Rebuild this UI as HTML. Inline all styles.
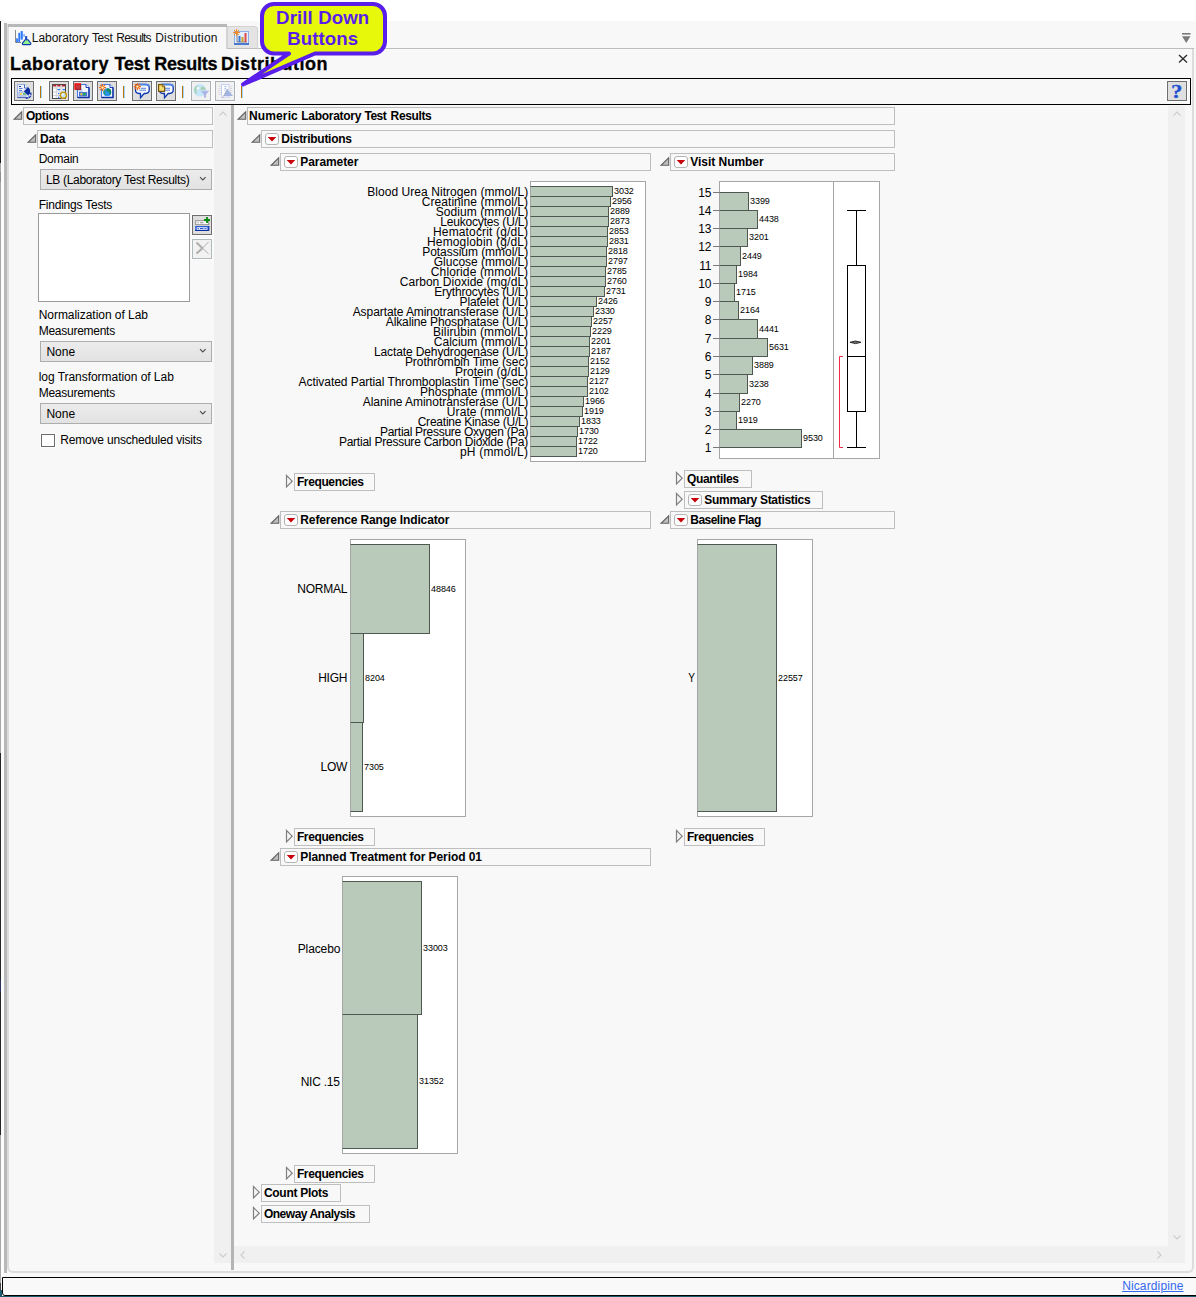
<!DOCTYPE html>
<html lang="en"><head><meta charset="utf-8"><title>Laboratory Test Results Distribution</title>
<style>
html,body{margin:0;padding:0;background:#fff;}
body{width:1196px;height:1297px;overflow:hidden;position:relative;font-family:"Liberation Sans",sans-serif;font-size:12px;color:#000;}
#root{position:absolute;left:0;top:0;width:1196px;height:1297px;overflow:hidden;}
#root div,#root span,#root svg,#root a{position:absolute;box-sizing:border-box;}
.t{white-space:nowrap;line-height:1;}

.ob{border:1px solid #bebebe;background:#f8f8f8;height:18px;}
.rb{border:1px solid #b4b4b4;border-radius:3px;background:#fff;width:14px;height:12px;}
.fr{border:1px solid #a6a6a6;background:#fff;}
.bar{border:1px solid #4e5850;border-left-color:#a6a6a6;background:#b9c9ba;}
.btn{border:1px solid #6e6e6e;background:#dfdfdf;width:20px;height:20px;box-shadow:0 0 0 1px #fdfdfd;}
.btd{border:1px solid #a9b0b6;background:#f1f1f1;width:20px;height:20px;box-shadow:0 0 0 1px #fdfdfd;}
.sep{width:1px;height:12px;background:#b8720a;border-right:1px solid #9ed6ff;box-sizing:content-box !important;}
.dd{border:1px solid #adadad;background:linear-gradient(#ececec,#e2e2e2);height:21px;width:172px;}
.tk{height:1px;background:#7a7a7a;width:6px;}

</style></head><body><div id="root">
<div style="left:0px;top:21px;width:1196px;height:1276px;background:#f8f8f8;"></div>
<div style="left:1px;top:21px;width:3px;height:1256px;background:#fcfcfc;"></div>
<div style="left:0px;top:21px;width:1px;height:142px;background:#1a1a1a;"></div>
<div style="left:0px;top:163px;width:1px;height:1120px;background:#a8a8a8;"></div>
<div style="left:0px;top:172px;width:1px;height:10px;background:#909090;"></div>
<div style="left:0px;top:753px;width:1px;height:382px;background:#242424;"></div>
<div style="left:0px;top:980px;width:1px;height:12px;background:#2a3060;"></div>
<div style="left:0px;top:1283px;width:1px;height:14px;background:#444;"></div>
<div style="left:4px;top:23px;width:3px;height:1250px;background:#b8b8b8;"></div>
<div style="left:7px;top:48px;width:1187px;height:1225px;border:2px solid #dcdcdc;border-top:none;border-radius:0 0 6px 6px;"></div>
<div style="left:7px;top:24px;width:2px;height:24px;background:#dcdcdc;"></div>
<div style="left:227px;top:48px;width:967px;height:1px;background:#bdbdbd;"></div>
<div style="left:8px;top:24px;width:219px;height:3px;background:#b8b8b8;"></div>
<div style="left:9px;top:27px;width:218px;height:22px;background:#f8f8f8;border-right:1px solid #d4d4d4;"></div>
<div style="left:227px;top:26px;width:31px;height:23px;background:#e4e4e4;border:1px solid #d2d2d2;border-radius:0 4px 0 0;border-bottom-color:#bdbdbd;"></div>
<svg style="left:14px;top:29px" width="18" height="17" viewBox="0 0 18 17">
<path d="M1.500 1v12.500h5.500" fill="none" stroke="#8a8a8a" stroke-width="1"/>
<rect x="2.100" y="9.300" width="1.800" height="4" fill="#2f7bff"/><rect x="4.300" y="3.800" width="1.800" height="9.500" fill="#2f7bff"/>
<rect x="6.600" y="2.100" width="2.200" height="8.500" fill="#2f7bff"/><rect x="9.300" y="5.100" width="1.500" height="2.600" fill="#6aa0ff"/>
<path d="M11.100 10.800L8.500 14.100c-.5.800 0 1.500.9 1.500h6.400c.9 0 1.400-.7.900-1.500L14.100 10.800z" fill="#8ef08e" stroke="#1038a8" stroke-width="1.100"/>
<rect x="11.100" y="7.100" width="2.100" height="4" fill="#1a4cc4"/>
</svg>
<span class="t" style="left:31.8px;top:32px;font-size:12px;color:#111;letter-spacing:-0.06px;">Laboratory</span>
<span class="t" style="left:92px;top:32px;font-size:12px;color:#111;letter-spacing:-0.4px;">Test</span>
<span class="t" style="left:116.3px;top:32px;font-size:12px;color:#111;letter-spacing:-0.79px;">Results</span>
<span class="t" style="left:155.2px;top:32px;font-size:12px;color:#111;letter-spacing:0.21px;">Distribution</span>
<svg style="left:232.500px;top:28.500px" width="17" height="17" viewBox="0 0 17 17">
<rect x="1.500" y="2.500" width="14" height="13" fill="#e4eefc" stroke="#8ab0ec" stroke-width="1"/>
<rect x="1" y="14" width="15" height="2" fill="#4a7ad0"/>
<path d="M4 5v8h10" fill="none" stroke="#808080" stroke-width="1"/>
<rect x="5.500" y="7" width="2" height="6" fill="#3c78d8"/><rect x="8.500" y="8" width="2" height="5" fill="#c8a028"/><rect x="11.500" y="4" width="2" height="9" fill="#e04848"/>
<path d="M3.500 0v7M0 3.500h7M1 1l5 5M6 1l-5 5" stroke="#f08c28" stroke-width="1"/>
</svg>
<svg style="left:1181px;top:32px" width="11" height="12" viewBox="0 0 11 12"><rect x="1" y="1" width="8.500" height="1.600" fill="#7a7a7a"/><path d="M1 4.200h8.500L5.250 11z" fill="#7a7a7a"/></svg>
<svg style="left:1178px;top:54px" width="10" height="10" viewBox="0 0 10 10"><path d="M1 1l8 7.500M9 1l-8 7.500" stroke="#2a2a2a" stroke-width="1.300" fill="none"/></svg>
<span class="t" style="left:10.1px;top:55px;font-size:18px;font-weight:bold;letter-spacing:0.5px;-webkit-text-stroke:.3px #000;">Laboratory</span>
<span class="t" style="left:114.4px;top:55px;font-size:18px;font-weight:bold;letter-spacing:-0.14px;-webkit-text-stroke:.3px #000;">Test</span>
<span class="t" style="left:154.2px;top:55px;font-size:18px;font-weight:bold;letter-spacing:-0.3px;-webkit-text-stroke:.3px #000;">Results</span>
<span class="t" style="left:221px;top:55px;font-size:18px;font-weight:bold;letter-spacing:0.5px;-webkit-text-stroke:.3px #000;">Distribution</span>
<div style="left:11px;top:78px;width:1180px;height:27px;background:#f8f8f8;border:1px solid #000;"></div>
<div class="btn" style="left:14px;top:81px;width:20px;height:20px;"></div>
<div class="btn" style="left:49px;top:81px;width:20px;height:20px;"></div>
<div class="btn" style="left:73px;top:81px;width:20px;height:20px;"></div>
<div class="btn" style="left:97px;top:81px;width:20px;height:20px;"></div>
<div class="btn" style="left:132px;top:81px;width:20px;height:20px;"></div>
<div class="btn" style="left:156px;top:81px;width:20px;height:20px;"></div>
<div class="btd" style="left:191px;top:81px;width:20px;height:20px;"></div>
<div class="btd" style="left:215px;top:81px;width:20px;height:20px;"></div>
<div class="btn" style="left:1167px;top:81px;width:20px;height:20px;"></div>
<div class="sep" style="left:40px;top:86px;width:1px;height:12px;"></div>
<div class="sep" style="left:123px;top:86px;width:1px;height:12px;"></div>
<div class="sep" style="left:182px;top:86px;width:1px;height:12px;"></div>
<div class="sep" style="left:241px;top:86px;width:1px;height:12px;"></div>
<svg style="left:14px;top:81px" width="20" height="20" viewBox="14 81 20 20"><path d="M17.500 84.500H25L28.500 88V97.500H17.500z" fill="#eef2fb" stroke="#9ab0e0"/><path d="M17.500 97.500H27" stroke="#4a68b8" stroke-width="1.200"/><path d="M24.500 84.500V88H28" fill="#fff" stroke="#4a68c0"/><path d="M19 86.500h2" stroke="#1a3aa0" stroke-width="1.200"/><path d="M19 88.500h3.500M19 90.500h3" stroke="#5a80d8" stroke-width="1.100"/><rect x="19" y="92" width="7" height="4" fill="#d8e2f6" stroke="#8aa2dc" stroke-width=".8"/><rect x="20" y="93" width="2" height="2" fill="#f4d250"/><rect x="23" y="93" width="2.500" height="2" fill="#6cc070"/><path d="M23.800 91.300L28 87.200L30 89.300V93.300L28 95.400z" fill="#0c2c9c"/><path d="M30.600 92.500c.8 2 .2 4.300-1.600 5.200-1 .5-2.200.7-3.800.6" fill="none" stroke="#1438a8" stroke-width="1.300" stroke-dasharray="2.600 .7"/></svg>
<svg style="left:49px;top:81px" width="20" height="20" viewBox="49 81 20 20"><rect x="52.500" y="84.500" width="13" height="14" fill="#fdfdfd" stroke="#4c4c4c"/><path d="M53 88h12M53 92h12M53 95.500h12M56.300 85v13M61 85v13" stroke="#c8c8c8" stroke-width=".8"/><path d="M53.200 85.600h3M57.300 85.600h3.200M61.800 85.600h3.200" stroke="#b4202c" stroke-width="1.600"/><path d="M57.500 89.700h2.600M62.500 89.700h2.500" stroke="#1c6cff" stroke-width="1.300"/><rect x="58" y="93" width="1.300" height="1.300" fill="#1c6cff"/><rect x="58" y="96.600" width="1.300" height="1.300" fill="#1c6cff"/><circle cx="63.400" cy="95.300" r="3" fill="#bfe4f8" stroke="#c89a14" stroke-width="1.500"/><circle cx="62.600" cy="94.500" r="1.100" fill="#eefaff"/></svg>
<svg style="left:73px;top:81px" width="20" height="20" viewBox="73 81 20 20"><path d="M77.5 84.5H86L89 87.5V97.5H77.5z" fill="#f2f6fe" stroke="#4a7ae0" stroke-width="1"/><path d="M86 84.5V87.5H89" fill="#fff" stroke="#1a3cb0" stroke-width="1"/><path d="M89 87.5V97.5H77.5" fill="none" stroke="#0c30a4" stroke-width="1.400"/><rect x="79.500" y="92.500" width="7.300" height="3.500" fill="#587ee0" stroke="#3a62d0" stroke-width=".8"/><rect x="80.400" y="93.200" width="1.800" height="2" fill="#fcd820"/><rect x="83.300" y="93.200" width="2.400" height="2" fill="#18b828"/><path d="M78 89.500h4M78.500 91h4" stroke="#7a98e0" stroke-width=".8"/><rect x="75" y="84" width="6" height="5.700" fill="#c43c40"/><path d="M75 89.700V84H81" fill="none" stroke="#f40808" stroke-width="1.300"/><path d="M75.400 89.400H80.700V84.600" fill="none" stroke="#9c1414" stroke-width=".9"/></svg>
<svg style="left:97px;top:81px" width="20" height="20" viewBox="97 81 20 20"><path d="M101.5 84.5H110L113 87.5V97.5H101.5z" fill="#f2f6fe" stroke="#4a7ae0" stroke-width="1"/><path d="M110 84.5V87.5H113" fill="#fff" stroke="#1a3cb0" stroke-width="1"/><path d="M113 87.5V97.5H101.5" fill="none" stroke="#0c30a4" stroke-width="1.400"/><circle cx="107.200" cy="92.300" r="4" fill="#2a94f0"/><path d="M107.200 88.300a4 4 0 0 1 4 4c0 1-.4 2-1 2.700-1-.3-1.400-1.200-1-2.200.4-1-.6-1.400-1.400-1.200-1 .2-1.800-.4-1.600-1.400.2-.9.800-1.500 1-1.900z" fill="#148a58"/><path d="M104 90.500c.8.300 1.500 1 1.400 2-.1 1 .5 1.600.3 2.600-.6-.2-2-1.300-2.300-2.500-.2-.8.100-1.600.6-2.100z" fill="#2aa06c"/><g stroke="#f06a10" stroke-width="1.100"><path d="M102.5 83.9v7.200M98.9 87.5h7.200M99.9 84.9l5.200 5.200M105.1 84.9l-5.200 5.200"/></g><circle cx="102.5" cy="87.5" r="1.200" fill="#ffe9b0"/></svg>
<svg style="left:132px;top:81px" width="20" height="20" viewBox="132 81 20 20"><path d="M138 84.500h8c2 0 3.200 1.400 3.200 3.200v2.400c0 2-1.500 3.400-3.500 3.400h-1.500l-3.700 4.200v-4.200h-1.500c-2.200 0-3.500-1.400-3.500-3.400v-2.400c0-1.800 1-3.200 2.500-3.200z" fill="#f4f9ff" stroke="#1038ac" stroke-width="1.300"/><path d="M137.6 84.500h8.600c1.600 0 2.600.8 3 2" fill="none" stroke="#4a88e8" stroke-width="1.300"/><path d="M141 88.300h5M139.5 90.200h6.500" stroke="#5a84d4" stroke-width="1"/><g stroke="#f06a10" stroke-width="1.100"><path d="M137.4 83.0v7.200M133.8 86.6h7.200M134.8 84.0l5.200 5.200M140.0 84.0l-5.200 5.200"/></g><circle cx="137.4" cy="86.6" r="1.200" fill="#ffe9b0"/></svg>
<svg style="left:156px;top:81px" width="20" height="20" viewBox="156 81 20 20"><path d="M162 84.500h8c2 0 3.200 1.400 3.200 3.200v2.400c0 2-1.500 3.400-3.500 3.400h-1.500l-3.700 4.200v-4.200h-1.500c-2.200 0-3.500-1.400-3.500-3.400v-2.400c0-1.800 1-3.200 2.500-3.200z" fill="#f4f9ff" stroke="#1038ac" stroke-width="1.300"/><path d="M161.6 84.500h8.600c1.600 0 2.600.8 3 2" fill="none" stroke="#4a88e8" stroke-width="1.300"/><path d="M165 88.300h5M163.5 90.200h6.500" stroke="#5a84d4" stroke-width="1"/><path d="M158.600 84.600h3.800l2.200 2.200v4.600h-6z" fill="#f8dc70" stroke="#7a5408" stroke-width="1.200"/><path d="M162.400 84.600v2.200h2.200" fill="#fff4c0" stroke="#7a5408" stroke-width=".8"/></svg>
<svg style="left:191px;top:81px" width="20" height="20" viewBox="191 81 20 20"><circle cx="199.800" cy="90.300" r="6.300" fill="#c4e6f8"/><path d="M196.500 86c1.500-.8 3 .2 2.400 1.700-.5 1.300-2.300.8-2.600 2.200-.3 1.500.8 2.300.3 3.600-.3.800-1 .6-1.400-.4-.5-1.300-.4-2.600-1-3.700.2-1.500 1-2.700 2.300-3.400zM202 86.200c1.800.3 3.400 1.800 4 3.600h-5.300c-.3-1 .1-2.800 1.300-3.600z" fill="#a9cfae"/><circle cx="198" cy="88" r="1.600" fill="#eef8fd"/><path d="M201 91h8l-3.100 3.400v3.400h-1.800v-3.400z" fill="#a8b2e2"/><path d="M201 91h8" stroke="#c4caee" stroke-width="1"/></svg>
<svg style="left:215px;top:81px" width="20" height="20" viewBox="215 81 20 20"><rect x="218" y="84.500" width="14.500" height="12.500" fill="#f2f2f2"/><path d="M218.500 86.500h2M218.500 88.500h2M218.500 90.500h2M218.500 92.500h2M218.500 94.500h2M230 86.500h2M230 88.500h2M230 90.500h2M230 92.500h2" stroke="#d2d2d2" stroke-width=".8"/><rect x="221.500" y="84.500" width="7.500" height="12.500" fill="#fdfdff" stroke="#c4d0f2"/><path d="M224.500 86.600h2M224.500 88.400h1.500M224.500 90.200h1" stroke="#8fa8e4" stroke-width=".9"/><path d="M227.200 89l5.800 7h-9.500z" fill="#a4b4e2"/><path d="M227.200 89l-4.700 9.600" stroke="#a0a0a0" stroke-width=".9" stroke-dasharray="1.300 .9" fill="none"/></svg>
<span class="t" style="left:1172.3px;top:82.3px;font-size:19px;font-weight:bold;color:#1c52d2;font-family:'Liberation Serif',serif;transform:scaleX(1.2);-webkit-text-stroke:.3px #1c52d2;">?</span>
<svg style="left:236px;top:0" width="156" height="90" viewBox="236 0 156 90">
<path d="M274 4h99a12 12 0 0 1 12 12v25.500a12 12 0 0 1 -12 12H315L243 84.500 289 53.500H274a12 12 0 0 1 -12 -12V16a12 12 0 0 1 12 -12z" fill="#e8f80a" stroke="#5a1eea" stroke-width="4" stroke-linejoin="round"/>
</svg>
<span class="t" style="left:276.09px;top:8.56px;font-size:18.67px;font-weight:bold;color:#5a1eea;letter-spacing:0.1px;">Drill Down</span>
<span class="t" style="left:287.14px;top:30.16px;font-size:18.67px;font-weight:bold;color:#5a1eea;letter-spacing:0.1px;">Buttons</span>
<div class="ob" style="left:23px;top:107px;width:190px;height:18px;"></div>
<svg style="left:12px;top:110px" width="11" height="11" viewBox="0 0 11 11"><path d="M2.100 9.300H9.700V1.800z" fill="#bebebe" stroke="#626262" stroke-width="1.100"/></svg>
<span class="t" style="left:25.9px;top:110px;font-size:12px;font-weight:bold;letter-spacing:-0.36px;">Options</span>
<div class="ob" style="left:37px;top:130px;width:176px;height:18px;"></div>
<svg style="left:26px;top:133px" width="11" height="11" viewBox="0 0 11 11"><path d="M2.100 9.300H9.700V1.800z" fill="#bebebe" stroke="#626262" stroke-width="1.100"/></svg>
<span class="t" style="left:39.9px;top:133px;font-size:12px;font-weight:bold;letter-spacing:-0.15px;">Data</span>
<span class="t" style="left:38.7px;top:153px;font-size:12px;letter-spacing:-0.26px;">Domain</span>
<div class="dd" style="left:40px;top:169px;width:172px;height:21px;"></div>
<span class="t" style="left:45.9px;top:174px;font-size:12px;letter-spacing:-0.3px;">LB (Laboratory Test Results)</span>
<svg style="left:199px;top:176px" width="8" height="6" viewBox="0 0 8 6"><path d="M1 1.200L3.800 4 6.600 1.200" fill="none" stroke="#4a4a4a" stroke-width="1.100"/></svg>
<span class="t" style="left:38.7px;top:199px;font-size:12px;letter-spacing:-0.22px;">Findings Tests</span>
<div style="left:38px;top:213px;width:152px;height:89px;background:#fff;border:1px solid #9a9a9a;"></div>
<div style="left:192px;top:215px;width:20px;height:20px;background:#dedede;border:1px solid #6e6e6e;box-shadow:0 0 0 1px #fdfdfd;"></div>
<svg style="left:194px;top:217px" width="17" height="17" viewBox="0 0 17 17">
<rect x="1.700" y="3.700" width="13" height="4" fill="#fff" stroke="#8e8e8e"/><path d="M3.500 5.700h1.300M6 5.700h3.500" stroke="#8e8e8e" stroke-width="1.100"/>
<rect x="1.200" y="9" width="13.700" height="5" fill="#2c5cd8"/><path d="M1.200 13.500h13.700V9" stroke="#0c2c9c" fill="none"/><rect x="2.700" y="10.300" width="10.700" height="2.400" fill="#fff"/><path d="M3.500 11.500h1.300M6 11.500h3.500M10.500 11.500h2" stroke="#2c5cd8" stroke-width="1.200"/>
<path d="M13 0v6M10 3h6" stroke="#0a8c12" stroke-width="1.900"/></svg>
<div style="left:192px;top:239px;width:20px;height:20px;background:#f2f2f2;border:1px solid #b2b9bd;box-shadow:0 0 0 1px #fdfdfd;"></div>
<svg style="left:195px;top:241px" width="15" height="15" viewBox="0 0 15 15"><path d="M1.500 1.500l6 5.700M7.500 7.200L1.500 12.500" stroke="#b0b0b0" stroke-width="2.200" fill="none"/><path d="M7.500 7.200L13.500 12.700M7.500 7.200L13.500 1" stroke="#b0b0b0" stroke-width="1" fill="none"/></svg>
<span class="t" style="left:38.7px;top:309px;font-size:12px;letter-spacing:-0.04px;">Normalization of Lab</span>
<span class="t" style="left:38.7px;top:325px;font-size:12px;letter-spacing:-0.26px;">Measurements</span>
<div class="dd" style="left:40px;top:341px;width:172px;height:21px;"></div>
<span class="t" style="left:46.4px;top:346px;font-size:12px;letter-spacing:0.05px;">None</span>
<svg style="left:199px;top:348px" width="8" height="6" viewBox="0 0 8 6"><path d="M1 1.200L3.800 4 6.600 1.200" fill="none" stroke="#4a4a4a" stroke-width="1.100"/></svg>
<span class="t" style="left:38.7px;top:371px;font-size:12px;letter-spacing:-0.04px;">log Transformation of Lab</span>
<span class="t" style="left:38.7px;top:387px;font-size:12px;letter-spacing:-0.26px;">Measurements</span>
<div class="dd" style="left:40px;top:403px;width:172px;height:21px;"></div>
<span class="t" style="left:46.4px;top:408px;font-size:12px;letter-spacing:0.05px;">None</span>
<svg style="left:199px;top:410px" width="8" height="6" viewBox="0 0 8 6"><path d="M1 1.200L3.800 4 6.600 1.200" fill="none" stroke="#4a4a4a" stroke-width="1.100"/></svg>
<div style="left:41px;top:434px;width:14px;height:13px;background:#fff;border:1px solid #6c6c6c;border-radius:.6px;box-shadow:0 0 0 1px #fdfdfd;"></div>
<span class="t" style="left:60.2px;top:434px;font-size:12px;letter-spacing:-0.18px;">Remove unscheduled visits</span>
<div style="left:214px;top:106px;width:17px;height:1157px;background:#f0f0f0;"></div>
<svg style="left:218.4px;top:108.5px" width="10" height="10" viewBox="0 0 10 10"><path d="M1.500 6.500L5 3l3.500 3.500" fill="none" stroke="#cdcdcd" stroke-width="1.100"/></svg>
<svg style="left:218.4px;top:1250px" width="10" height="10" viewBox="0 0 10 10"><path d="M1.500 3.500L5 7l3.500-3.500" fill="none" stroke="#cdcdcd" stroke-width="1.100"/></svg>
<div style="left:231px;top:105px;width:3px;height:1165px;background:#b4b4b4;"></div>
<div style="left:1168px;top:106px;width:17px;height:1157px;background:#f0f0f0;"></div>
<div style="left:234px;top:1246px;width:951px;height:17px;background:#f0f0f0;"></div>
<svg style="left:1172px;top:109px" width="10" height="10" viewBox="0 0 10 10"><path d="M1.500 6.500L5 3l3.500 3.500" fill="none" stroke="#cdcdcd" stroke-width="1.100"/></svg>
<svg style="left:1172px;top:1232px" width="10" height="10" viewBox="0 0 10 10"><path d="M1.500 3.500L5 7l3.500-3.500" fill="none" stroke="#cdcdcd" stroke-width="1.100"/></svg>
<svg style="left:238px;top:1250px" width="10" height="10" viewBox="0 0 10 10"><path d="M6.500 1.500L3 5l3.500 3.500" fill="none" stroke="#cdcdcd" stroke-width="1.100"/></svg>
<svg style="left:1154px;top:1250px" width="10" height="10" viewBox="0 0 10 10"><path d="M3.500 1.500L7 5 3.500 8.500" fill="none" stroke="#cdcdcd" stroke-width="1.100"/></svg>
<div style="left:2px;top:1277px;width:1200px;height:19px;background:#f9f9f9;border:1px solid #000;border-radius:0 0 0 3px;"></div>
<div style="left:0px;top:1296px;width:1196px;height:1px;background:#1c5a6e;"></div>
<div style="left:0px;top:1290px;width:2px;height:7px;background:#1c5a6e;border-radius:0 0 0 2px;"></div>
<a class="t" style="left:1122.13px;top:1280px;font-size:12px;color:#3468f0;letter-spacing:0.13px;text-decoration:underline;">Nicardipine</a>
<div class="ob" style="left:247px;top:107px;width:648px;height:18px;"></div>
<svg style="left:236px;top:110px" width="11" height="11" viewBox="0 0 11 11"><path d="M2.100 9.300H9.700V1.800z" fill="#bebebe" stroke="#626262" stroke-width="1.100"/></svg>
<span class="t" style="left:249.1px;top:110px;font-size:12px;font-weight:bold;letter-spacing:0.11px;">Numeric</span>
<span class="t" style="left:301.3px;top:110px;font-size:12px;font-weight:bold;letter-spacing:-0.29px;">Laboratory</span>
<span class="t" style="left:364.5px;top:110px;font-size:12px;font-weight:bold;letter-spacing:-0.52px;">Test</span>
<span class="t" style="left:390.6px;top:110px;font-size:12px;font-weight:bold;letter-spacing:-0.36px;">Results</span>
<div class="ob" style="left:261px;top:130px;width:634px;height:18px;"></div>
<svg style="left:250px;top:133px" width="11" height="11" viewBox="0 0 11 11"><path d="M2.100 9.300H9.700V1.800z" fill="#bebebe" stroke="#626262" stroke-width="1.100"/></svg>
<div class="rb" style="left:265px;top:133px;width:14px;height:12px;"></div>
<svg style="left:267px;top:136px" width="10" height="6" viewBox="0 0 10 6"><path d="M.7 1h8.600L5 5.400z" fill="#c8000a"/></svg>
<span class="t" style="left:281.3px;top:133px;font-size:12px;font-weight:bold;letter-spacing:-0.28px;">Distributions</span>
<div class="ob" style="left:280px;top:153px;width:371px;height:18px;"></div>
<svg style="left:269px;top:156px" width="11" height="11" viewBox="0 0 11 11"><path d="M2.100 9.300H9.700V1.800z" fill="#bebebe" stroke="#626262" stroke-width="1.100"/></svg>
<div class="rb" style="left:284px;top:156px;width:14px;height:12px;"></div>
<svg style="left:286px;top:159px" width="10" height="6" viewBox="0 0 10 6"><path d="M.7 1h8.600L5 5.400z" fill="#c8000a"/></svg>
<span class="t" style="left:300.3px;top:156px;font-size:12px;font-weight:bold;letter-spacing:-0.08px;">Parameter</span>
<div class="ob" style="left:670px;top:153px;width:225px;height:18px;"></div>
<svg style="left:659px;top:156px" width="11" height="11" viewBox="0 0 11 11"><path d="M2.100 9.300H9.700V1.800z" fill="#bebebe" stroke="#626262" stroke-width="1.100"/></svg>
<div class="rb" style="left:674px;top:156px;width:14px;height:12px;"></div>
<svg style="left:676px;top:159px" width="10" height="6" viewBox="0 0 10 6"><path d="M.7 1h8.600L5 5.400z" fill="#c8000a"/></svg>
<span class="t" style="left:690.3px;top:156px;font-size:12px;font-weight:bold;letter-spacing:-0.04px;">Visit Number</span>
<div class="fr" style="left:530px;top:181px;width:116px;height:281px;"></div>
<div class="bar" style="left:530px;top:186px;width:83px;height:11px;"></div>
<span class="t" style="left:367.2px;top:186px;font-size:12px;letter-spacing:0.06px;">Blood Urea Nitrogen (mmol/L)</span>
<span class="t" style="left:614px;top:186.5px;font-size:9px;letter-spacing:-0.05px;">3032</span>
<div class="bar" style="left:530px;top:196px;width:81px;height:11px;"></div>
<span class="t" style="left:421.8px;top:196px;font-size:12px;letter-spacing:0.05px;">Creatinine (mmol/L)</span>
<span class="t" style="left:612px;top:196.5px;font-size:9px;letter-spacing:-0.05px;">2956</span>
<div class="bar" style="left:530px;top:206px;width:79px;height:11px;"></div>
<span class="t" style="left:435.8px;top:206px;font-size:12px;letter-spacing:0.07px;">Sodium (mmol/L)</span>
<span class="t" style="left:610px;top:206.5px;font-size:9px;letter-spacing:-0.05px;">2889</span>
<div class="bar" style="left:530px;top:216px;width:79px;height:11px;"></div>
<span class="t" style="left:440.2px;top:216px;font-size:12px;letter-spacing:-0.17px;">Leukocytes (U/L)</span>
<span class="t" style="left:610px;top:216.5px;font-size:9px;letter-spacing:-0.05px;">2873</span>
<div class="bar" style="left:530px;top:226px;width:78px;height:11px;"></div>
<span class="t" style="left:433px;top:226px;font-size:12px;letter-spacing:0.15px;">Hematocrit (g/dL)</span>
<span class="t" style="left:609px;top:226.5px;font-size:9px;letter-spacing:-0.05px;">2853</span>
<div class="bar" style="left:530px;top:236px;width:78px;height:11px;"></div>
<span class="t" style="left:427px;top:236px;font-size:12px;letter-spacing:0.15px;">Hemoglobin (g/dL)</span>
<span class="t" style="left:609px;top:236.5px;font-size:9px;letter-spacing:-0.05px;">2831</span>
<div class="bar" style="left:530px;top:246px;width:77px;height:11px;"></div>
<span class="t" style="left:422.2px;top:246px;font-size:12px;letter-spacing:-0.04px;">Potassium (mmol/L)</span>
<span class="t" style="left:608px;top:246.5px;font-size:9px;letter-spacing:-0.05px;">2818</span>
<div class="bar" style="left:530px;top:256px;width:77px;height:11px;"></div>
<span class="t" style="left:433.8px;top:256px;font-size:12px;letter-spacing:-0.02px;">Glucose (mmol/L)</span>
<span class="t" style="left:608px;top:256.5px;font-size:9px;letter-spacing:-0.05px;">2797</span>
<div class="bar" style="left:530px;top:266px;width:76px;height:11px;"></div>
<span class="t" style="left:430.8px;top:266px;font-size:12px;letter-spacing:0.12px;">Chloride (mmol/L)</span>
<span class="t" style="left:607px;top:266.5px;font-size:9px;letter-spacing:-0.05px;">2785</span>
<div class="bar" style="left:530px;top:276px;width:76px;height:11px;"></div>
<span class="t" style="left:399.7px;top:276px;font-size:12px;letter-spacing:0.05px;">Carbon Dioxide (mg/dL)</span>
<span class="t" style="left:607px;top:276.5px;font-size:9px;letter-spacing:-0.05px;">2760</span>
<div class="bar" style="left:530px;top:286px;width:75px;height:11px;"></div>
<span class="t" style="left:434.2px;top:286px;font-size:12px;letter-spacing:-0.15px;">Erythrocytes (U/L)</span>
<span class="t" style="left:606px;top:286.5px;font-size:9px;letter-spacing:-0.05px;">2731</span>
<div class="bar" style="left:530px;top:296px;width:67px;height:11px;"></div>
<span class="t" style="left:459.5px;top:296px;font-size:12px;letter-spacing:-0.09px;">Platelet (U/L)</span>
<span class="t" style="left:598px;top:296.5px;font-size:9px;letter-spacing:-0.05px;">2426</span>
<div class="bar" style="left:530px;top:306px;width:64px;height:11px;"></div>
<span class="t" style="left:352.7px;top:306px;font-size:12px;letter-spacing:-0.08px;">Aspartate Aminotransferase (U/L)</span>
<span class="t" style="left:595px;top:306.5px;font-size:9px;letter-spacing:-0.05px;">2330</span>
<div class="bar" style="left:530px;top:316px;width:62px;height:11px;"></div>
<span class="t" style="left:385.8px;top:316px;font-size:12px;letter-spacing:-0.12px;">Alkaline Phosphatase (U/L)</span>
<span class="t" style="left:593px;top:316.5px;font-size:9px;letter-spacing:-0.05px;">2257</span>
<div class="bar" style="left:530px;top:326px;width:61px;height:11px;"></div>
<span class="t" style="left:433px;top:326px;font-size:12px;letter-spacing:0.1px;">Bilirubin (mmol/L)</span>
<span class="t" style="left:592px;top:326.5px;font-size:9px;letter-spacing:-0.05px;">2229</span>
<div class="bar" style="left:530px;top:336px;width:60px;height:11px;"></div>
<span class="t" style="left:433.8px;top:336px;font-size:12px;letter-spacing:0.02px;">Calcium (mmol/L)</span>
<span class="t" style="left:591px;top:336.5px;font-size:9px;letter-spacing:-0.05px;">2201</span>
<div class="bar" style="left:530px;top:346px;width:60px;height:11px;"></div>
<span class="t" style="left:374px;top:346px;font-size:12px;letter-spacing:-0.12px;">Lactate Dehydrogenase (U/L)</span>
<span class="t" style="left:591px;top:346.5px;font-size:9px;letter-spacing:-0.05px;">2187</span>
<div class="bar" style="left:530px;top:356px;width:59px;height:11px;"></div>
<span class="t" style="left:404.9px;top:356px;font-size:12px;letter-spacing:-0.06px;">Prothrombin Time (sec)</span>
<span class="t" style="left:590px;top:356.5px;font-size:9px;letter-spacing:-0.05px;">2152</span>
<div class="bar" style="left:530px;top:366px;width:59px;height:11px;"></div>
<span class="t" style="left:454.9px;top:366px;font-size:12px;letter-spacing:0.04px;">Protein (g/dL)</span>
<span class="t" style="left:590px;top:366.5px;font-size:9px;letter-spacing:-0.05px;">2129</span>
<div class="bar" style="left:530px;top:376px;width:58px;height:11px;"></div>
<span class="t" style="left:298.5px;top:376px;font-size:12px;letter-spacing:-0.05px;">Activated Partial Thromboplastin Time (sec)</span>
<span class="t" style="left:589px;top:376.5px;font-size:9px;letter-spacing:-0.05px;">2127</span>
<div class="bar" style="left:530px;top:386px;width:58px;height:11px;"></div>
<span class="t" style="left:420.1px;top:386px;font-size:12px;">Phosphate (mmol/L)</span>
<span class="t" style="left:589px;top:386.5px;font-size:9px;letter-spacing:-0.05px;">2102</span>
<div class="bar" style="left:530px;top:396px;width:54px;height:11px;"></div>
<span class="t" style="left:362.7px;top:396px;font-size:12px;letter-spacing:-0.04px;">Alanine Aminotransferase (U/L)</span>
<span class="t" style="left:585px;top:396.5px;font-size:9px;letter-spacing:-0.05px;">1966</span>
<div class="bar" style="left:530px;top:406px;width:53px;height:11px;"></div>
<span class="t" style="left:446.8px;top:406px;font-size:12px;letter-spacing:0.1px;">Urate (mmol/L)</span>
<span class="t" style="left:584px;top:406.5px;font-size:9px;letter-spacing:-0.05px;">1919</span>
<div class="bar" style="left:530px;top:416px;width:50px;height:11px;"></div>
<span class="t" style="left:417.7px;top:416px;font-size:12px;letter-spacing:-0.23px;">Creatine Kinase (U/L)</span>
<span class="t" style="left:581px;top:416.5px;font-size:9px;letter-spacing:-0.05px;">1833</span>
<div class="bar" style="left:530px;top:426px;width:48px;height:11px;"></div>
<span class="t" style="left:380px;top:426px;font-size:12px;letter-spacing:-0.28px;">Partial Pressure Oxygen (Pa)</span>
<span class="t" style="left:579px;top:426.5px;font-size:9px;letter-spacing:-0.05px;">1730</span>
<div class="bar" style="left:530px;top:436px;width:47px;height:11px;"></div>
<span class="t" style="left:338.9px;top:436px;font-size:12px;letter-spacing:-0.23px;">Partial Pressure Carbon Dioxide (Pa)</span>
<span class="t" style="left:578px;top:436.5px;font-size:9px;letter-spacing:-0.05px;">1722</span>
<div class="bar" style="left:530px;top:446px;width:47px;height:11px;"></div>
<span class="t" style="left:459.9px;top:446px;font-size:12px;letter-spacing:0.21px;">pH (mmol/L)</span>
<span class="t" style="left:578px;top:446.5px;font-size:9px;letter-spacing:-0.05px;">1720</span>
<div class="ob" style="left:294px;top:473px;width:81px;height:18px;"></div>
<svg style="left:285px;top:474px" width="9" height="14" viewBox="0 0 9 14"><path d="M1.500 1.500v11.400l5.700-5.700z" fill="#f6f6f6" stroke="#808080" stroke-width="1.200"/></svg>
<span class="t" style="left:296.9px;top:476px;font-size:12px;font-weight:bold;letter-spacing:-0.37px;">Frequencies</span>
<div class="fr" style="left:719px;top:181px;width:161px;height:278px;"></div>
<div style="left:833px;top:182px;width:1px;height:276px;background:#a6a6a6;"></div>
<div class="tk" style="left:713px;top:192px;width:6px;height:1px;"></div>
<span class="t" style="left:698.35px;top:187px;font-size:12px;letter-spacing:-0.3px;">15</span>
<div class="tk" style="left:713px;top:210px;width:6px;height:1px;"></div>
<span class="t" style="left:698.35px;top:205px;font-size:12px;letter-spacing:-0.3px;">14</span>
<div class="tk" style="left:713px;top:228px;width:6px;height:1px;"></div>
<span class="t" style="left:698.35px;top:223px;font-size:12px;letter-spacing:-0.3px;">13</span>
<div class="tk" style="left:713px;top:246px;width:6px;height:1px;"></div>
<span class="t" style="left:698.35px;top:241px;font-size:12px;letter-spacing:-0.3px;">12</span>
<div class="tk" style="left:713px;top:265px;width:6px;height:1px;"></div>
<span class="t" style="left:699.24px;top:260px;font-size:12px;letter-spacing:-0.3px;">11</span>
<div class="tk" style="left:713px;top:283px;width:6px;height:1px;"></div>
<span class="t" style="left:698.35px;top:278px;font-size:12px;letter-spacing:-0.3px;">10</span>
<div class="tk" style="left:713px;top:301px;width:6px;height:1px;"></div>
<span class="t" style="left:704.73px;top:296px;font-size:12px;letter-spacing:-0.3px;">9</span>
<div class="tk" style="left:713px;top:319px;width:6px;height:1px;"></div>
<span class="t" style="left:704.73px;top:314px;font-size:12px;letter-spacing:-0.3px;">8</span>
<div class="tk" style="left:713px;top:338px;width:6px;height:1px;"></div>
<span class="t" style="left:704.73px;top:333px;font-size:12px;letter-spacing:-0.3px;">7</span>
<div class="tk" style="left:713px;top:356px;width:6px;height:1px;"></div>
<span class="t" style="left:704.73px;top:351px;font-size:12px;letter-spacing:-0.3px;">6</span>
<div class="tk" style="left:713px;top:374px;width:6px;height:1px;"></div>
<span class="t" style="left:704.73px;top:369px;font-size:12px;letter-spacing:-0.3px;">5</span>
<div class="tk" style="left:713px;top:393px;width:6px;height:1px;"></div>
<span class="t" style="left:704.73px;top:388px;font-size:12px;letter-spacing:-0.3px;">4</span>
<div class="tk" style="left:713px;top:411px;width:6px;height:1px;"></div>
<span class="t" style="left:704.73px;top:406px;font-size:12px;letter-spacing:-0.3px;">3</span>
<div class="tk" style="left:713px;top:429px;width:6px;height:1px;"></div>
<span class="t" style="left:704.73px;top:424px;font-size:12px;letter-spacing:-0.3px;">2</span>
<div class="tk" style="left:713px;top:447px;width:6px;height:1px;"></div>
<span class="t" style="left:704.73px;top:442px;font-size:12px;letter-spacing:-0.3px;">1</span>
<div class="bar" style="left:719px;top:192px;width:30px;height:19px;"></div>
<span class="t" style="left:750px;top:197px;font-size:9px;letter-spacing:-0.05px;">3399</span>
<div class="bar" style="left:719px;top:210px;width:39px;height:19px;"></div>
<span class="t" style="left:759px;top:215px;font-size:9px;letter-spacing:-0.05px;">4438</span>
<div class="bar" style="left:719px;top:228px;width:29px;height:19px;"></div>
<span class="t" style="left:749px;top:233px;font-size:9px;letter-spacing:-0.05px;">3201</span>
<div class="bar" style="left:719px;top:246px;width:22px;height:20px;"></div>
<span class="t" style="left:742px;top:251.5px;font-size:9px;letter-spacing:-0.05px;">2449</span>
<div class="bar" style="left:719px;top:265px;width:18px;height:19px;"></div>
<span class="t" style="left:738px;top:270px;font-size:9px;letter-spacing:-0.05px;">1984</span>
<div class="bar" style="left:719px;top:283px;width:16px;height:19px;"></div>
<span class="t" style="left:736px;top:288px;font-size:9px;letter-spacing:-0.05px;">1715</span>
<div class="bar" style="left:719px;top:301px;width:20px;height:19px;"></div>
<span class="t" style="left:740px;top:306px;font-size:9px;letter-spacing:-0.05px;">2164</span>
<div class="bar" style="left:719px;top:319px;width:39px;height:20px;"></div>
<span class="t" style="left:759px;top:324.5px;font-size:9px;letter-spacing:-0.05px;">4441</span>
<div class="bar" style="left:719px;top:338px;width:49px;height:19px;"></div>
<span class="t" style="left:769px;top:343px;font-size:9px;letter-spacing:-0.05px;">5631</span>
<div class="bar" style="left:719px;top:356px;width:34px;height:19px;"></div>
<span class="t" style="left:754px;top:361px;font-size:9px;letter-spacing:-0.05px;">3889</span>
<div class="bar" style="left:719px;top:374px;width:29px;height:20px;"></div>
<span class="t" style="left:749px;top:379.5px;font-size:9px;letter-spacing:-0.05px;">3238</span>
<div class="bar" style="left:719px;top:393px;width:21px;height:19px;"></div>
<span class="t" style="left:741px;top:398px;font-size:9px;letter-spacing:-0.05px;">2270</span>
<div class="bar" style="left:719px;top:411px;width:18px;height:19px;"></div>
<span class="t" style="left:738px;top:416px;font-size:9px;letter-spacing:-0.05px;">1919</span>
<div class="bar" style="left:719px;top:429px;width:83px;height:19px;"></div>
<span class="t" style="left:803px;top:434px;font-size:9px;letter-spacing:-0.05px;">9530</span>
<svg style="left:834px;top:182px" width="45" height="276" viewBox="834 182 45 276">
<path d="M847 210.500h19M856.500 210.500V265.500M856.500 411.500V447.500M847 447.500h19M847.500 356.500h18" stroke="#000" fill="none"/>
<rect x="847.500" y="265.500" width="18" height="146" fill="none" stroke="#000"/>
<path d="M850 342.300l5.500-1.300 5.500 1.300-5.500 1.300z" fill="#777" stroke="#1a1a1a" stroke-width=".9"/>
<path d="M843 356.500h-3.500V447.500H843" fill="none" stroke="#f02a44"/>
</svg>
<div class="ob" style="left:684px;top:470px;width:68px;height:18px;"></div>
<svg style="left:675px;top:471px" width="9" height="14" viewBox="0 0 9 14"><path d="M1.500 1.500v11.400l5.700-5.700z" fill="#f6f6f6" stroke="#808080" stroke-width="1.200"/></svg>
<span class="t" style="left:686.9px;top:473px;font-size:12px;font-weight:bold;letter-spacing:-0.33px;">Quantiles</span>
<div class="ob" style="left:684px;top:491px;width:139px;height:18px;"></div>
<svg style="left:675px;top:492px" width="9" height="14" viewBox="0 0 9 14"><path d="M1.500 1.500v11.400l5.700-5.700z" fill="#f6f6f6" stroke="#808080" stroke-width="1.200"/></svg>
<div class="rb" style="left:688px;top:494px;width:14px;height:12px;"></div>
<svg style="left:690px;top:497px" width="10" height="6" viewBox="0 0 10 6"><path d="M.7 1h8.600L5 5.400z" fill="#c8000a"/></svg>
<span class="t" style="left:704.3px;top:494px;font-size:12px;font-weight:bold;letter-spacing:-0.3px;">Summary Statistics</span>
<div class="ob" style="left:280px;top:511px;width:371px;height:18px;"></div>
<svg style="left:269px;top:514px" width="11" height="11" viewBox="0 0 11 11"><path d="M2.100 9.300H9.700V1.800z" fill="#bebebe" stroke="#626262" stroke-width="1.100"/></svg>
<div class="rb" style="left:284px;top:514px;width:14px;height:12px;"></div>
<svg style="left:286px;top:517px" width="10" height="6" viewBox="0 0 10 6"><path d="M.7 1h8.600L5 5.400z" fill="#c8000a"/></svg>
<span class="t" style="left:300.3px;top:514px;font-size:12px;font-weight:bold;letter-spacing:-0.12px;">Reference Range Indicator</span>
<div class="fr" style="left:350px;top:539px;width:116px;height:278px;"></div>
<div class="bar" style="left:350px;top:544px;width:80px;height:90px;"></div>
<span class="t" style="left:297.31px;top:583px;font-size:12px;letter-spacing:-0.25px;">NORMAL</span>
<span class="t" style="left:431px;top:584.5px;font-size:9px;letter-spacing:-0.05px;">48846</span>
<div class="bar" style="left:350px;top:633px;width:14px;height:90px;"></div>
<span class="t" style="left:318.15px;top:672px;font-size:12px;letter-spacing:-0.25px;">HIGH</span>
<span class="t" style="left:365px;top:673.5px;font-size:9px;letter-spacing:-0.05px;">8204</span>
<div class="bar" style="left:350px;top:722px;width:13px;height:90px;"></div>
<span class="t" style="left:320.57px;top:761px;font-size:12px;letter-spacing:-0.25px;">LOW</span>
<span class="t" style="left:364px;top:762.5px;font-size:9px;letter-spacing:-0.05px;">7305</span>
<div class="ob" style="left:294px;top:828px;width:81px;height:18px;"></div>
<svg style="left:285px;top:829px" width="9" height="14" viewBox="0 0 9 14"><path d="M1.500 1.500v11.400l5.700-5.700z" fill="#f6f6f6" stroke="#808080" stroke-width="1.200"/></svg>
<span class="t" style="left:296.9px;top:831px;font-size:12px;font-weight:bold;letter-spacing:-0.37px;">Frequencies</span>
<div class="ob" style="left:670px;top:511px;width:225px;height:18px;"></div>
<svg style="left:659px;top:514px" width="11" height="11" viewBox="0 0 11 11"><path d="M2.100 9.300H9.700V1.800z" fill="#bebebe" stroke="#626262" stroke-width="1.100"/></svg>
<div class="rb" style="left:674px;top:514px;width:14px;height:12px;"></div>
<svg style="left:676px;top:517px" width="10" height="6" viewBox="0 0 10 6"><path d="M.7 1h8.600L5 5.400z" fill="#c8000a"/></svg>
<span class="t" style="left:690.3px;top:514px;font-size:12px;font-weight:bold;letter-spacing:-0.53px;">Baseline Flag</span>
<div class="fr" style="left:697px;top:539px;width:116px;height:278px;"></div>
<div class="bar" style="left:697px;top:544px;width:80px;height:268px;"></div>
<span class="t" style="left:687px;top:672px;font-size:12px;transform:scaleX(.84);transform-origin:100% 50%;">Y</span>
<span class="t" style="left:778px;top:673.5px;font-size:9px;letter-spacing:-0.05px;">22557</span>
<div class="ob" style="left:684px;top:828px;width:81px;height:18px;"></div>
<svg style="left:675px;top:829px" width="9" height="14" viewBox="0 0 9 14"><path d="M1.500 1.500v11.400l5.700-5.700z" fill="#f6f6f6" stroke="#808080" stroke-width="1.200"/></svg>
<span class="t" style="left:686.9px;top:831px;font-size:12px;font-weight:bold;letter-spacing:-0.37px;">Frequencies</span>
<div class="ob" style="left:280px;top:848px;width:371px;height:18px;"></div>
<svg style="left:269px;top:851px" width="11" height="11" viewBox="0 0 11 11"><path d="M2.100 9.300H9.700V1.800z" fill="#bebebe" stroke="#626262" stroke-width="1.100"/></svg>
<div class="rb" style="left:284px;top:851px;width:14px;height:12px;"></div>
<svg style="left:286px;top:854px" width="10" height="6" viewBox="0 0 10 6"><path d="M.7 1h8.600L5 5.400z" fill="#c8000a"/></svg>
<span class="t" style="left:300.3px;top:851px;font-size:12px;font-weight:bold;letter-spacing:-0.08px;">Planned Treatment for Period 01</span>
<div class="fr" style="left:342px;top:876px;width:116px;height:278px;"></div>
<div class="bar" style="left:342px;top:881px;width:80px;height:134px;"></div>
<div class="bar" style="left:342px;top:1014px;width:76px;height:135px;"></div>
<span class="t" style="left:297.7px;top:943px;font-size:12px;letter-spacing:-0.11px;">Placebo</span>
<span class="t" style="left:300.7px;top:1076px;font-size:12px;letter-spacing:-0.23px;">NIC .15</span>
<span class="t" style="left:423px;top:943.5px;font-size:9px;letter-spacing:-0.05px;">33003</span>
<span class="t" style="left:419px;top:1076.5px;font-size:9px;letter-spacing:-0.05px;">31352</span>
<div class="ob" style="left:294px;top:1165px;width:81px;height:18px;"></div>
<svg style="left:285px;top:1166px" width="9" height="14" viewBox="0 0 9 14"><path d="M1.500 1.500v11.400l5.700-5.700z" fill="#f6f6f6" stroke="#808080" stroke-width="1.200"/></svg>
<span class="t" style="left:296.9px;top:1168px;font-size:12px;font-weight:bold;letter-spacing:-0.37px;">Frequencies</span>
<div class="ob" style="left:261px;top:1184px;width:80px;height:18px;"></div>
<svg style="left:252px;top:1185px" width="9" height="14" viewBox="0 0 9 14"><path d="M1.500 1.500v11.400l5.700-5.700z" fill="#f6f6f6" stroke="#808080" stroke-width="1.200"/></svg>
<span class="t" style="left:263.9px;top:1187px;font-size:12px;font-weight:bold;letter-spacing:-0.27px;">Count Plots</span>
<div class="ob" style="left:261px;top:1205px;width:109px;height:18px;"></div>
<svg style="left:252px;top:1206px" width="9" height="14" viewBox="0 0 9 14"><path d="M1.500 1.500v11.400l5.700-5.700z" fill="#f6f6f6" stroke="#808080" stroke-width="1.200"/></svg>
<span class="t" style="left:263.9px;top:1208px;font-size:12px;font-weight:bold;letter-spacing:-0.48px;">Oneway Analysis</span>
</div></body></html>
